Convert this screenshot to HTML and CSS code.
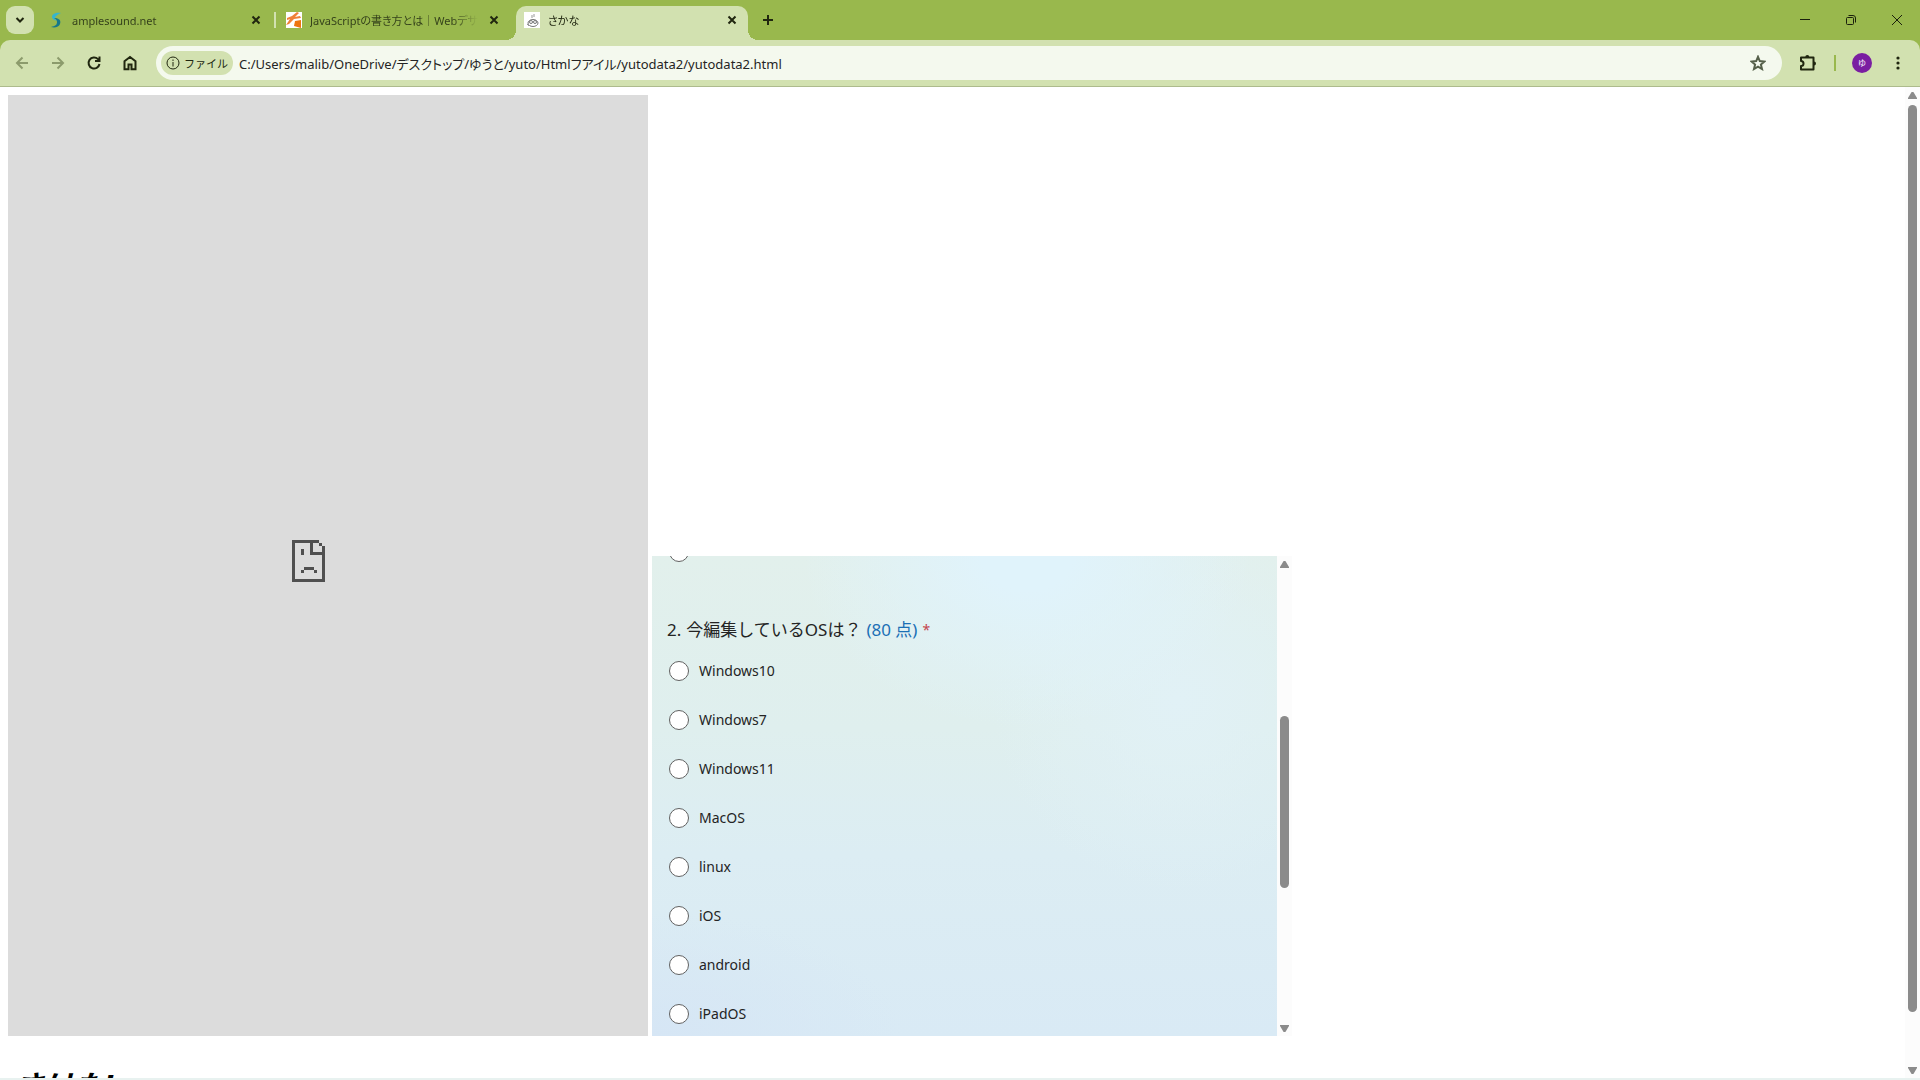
FILE: index.html
```html
<!DOCTYPE html>
<html lang="ja">
<head>
    <meta charset="UTF-8">
    <meta name="viewport" content="width=device-width, initial-scale=1.0">
    <title>さかな</title>
    <link rel="stylesheet" href="styles.css">
</head>
<body>
    <header class="browser">
        <div class="tab-bar">
            <button class="tab-search" aria-label="タブを検索">
                <svg width="10" height="6" viewBox="0 0 10 6"><path d="M1.5 1 5 4.5 8.5 1" fill="none" stroke="#20260f" stroke-width="2"/></svg>
            </button>
            <div class="tab">
                <svg class="favicon" viewBox="0 0 16 16">
                    <path d="M13 1C8 0 4 2 4 5c0 2 2 3 5 4C6 7 6 4 13 1z" fill="#35b5d0"/>
                    <path d="M8 6c4 1 5 3 4 6-1 3-5 4-9 3 4-1 6-2 6-5 0-2-1-3-3-4z" fill="#16788a"/>
                </svg>
                <span class="tab-title">amplesound.net</span>
                <button class="tab-close" aria-label="閉じる"><svg width="10" height="10" viewBox="0 0 10 10"><path d="m1.5 1.5 7 7m0-7-7 7"/></svg></button>
            </div>
            <div class="tab divided">
                <svg class="favicon" viewBox="0 0 16 16">
                    <path d="M0 0h16v16H0z" fill="#fff"/>
                    <path d="m1 6 5-2 5-4 2 1-4 4 5-1 1 2-7 1-5 5-3 1 4-6-3 1z" fill="#f08038"/>
                    <path d="m9 9 6-1v8l-7-2z" fill="#ee7410"/>
                </svg>
                <span class="tab-title">JavaScriptの書き方とは｜Webデサ</span>
                <button class="tab-close" aria-label="閉じる"><svg width="10" height="10" viewBox="0 0 10 10"><path d="m1.5 1.5 7 7m0-7-7 7"/></svg></button>
            </div>
            <div class="tab active">
                <svg class="favicon" viewBox="0 0 16 16">
                    <path d="M0 0h16v16H0z" fill="#fff"/>
                    <g fill="none" stroke="#777">
                        <ellipse cx="9" cy="11" rx="5" ry="3.5"/>
                        <circle cx="7" cy="10" r="1.5"/>
                        <circle cx="11" cy="10" r="1.5"/>
                        <path d="M8 3v3m2-4v3M3 12l2 2" stroke="#999"/>
                    </g>
                </svg>
                <span class="tab-title">さかな</span>
                <button class="tab-close" aria-label="閉じる"><svg width="10" height="10" viewBox="0 0 10 10"><path d="m1.5 1.5 7 7m0-7-7 7"/></svg></button>
            </div>
            <button class="new-tab" aria-label="新しいタブ">
                <svg width="12" height="12" viewBox="0 0 12 12"><path d="M6 1v10M1 6h10" stroke="#20260f" stroke-width="2"/></svg>
            </button>
            <div class="window-controls">
                <button aria-label="最小化"><svg width="12" height="12" viewBox="0 0 12 12"><path d="M1 5.500h10"/></svg></button>
                <button aria-label="元に戻す"><svg width="12" height="12" viewBox="0 0 12 12"><rect x="1.500" y="3.500" width="7" height="7" rx="1"/><path d="M3.500 1.500H8a2.500 2.500 0 0 1 2.500 2.500v4.500"/></svg></button>
                <button aria-label="閉じる"><svg width="12" height="12" viewBox="0 0 12 12"><path d="m1 1 10 10M11 1 1 11"/></svg></button>
            </div>
        </div>
        <div class="toolbar-wrap">
            <div class="toolbar">
                <button class="tool dim" aria-label="戻る"><svg width="16" height="16" viewBox="0 0 16 16"><path d="M14 8H3m5.500-5.500L3 8l5.500 5.500"/></svg></button>
                <button class="tool dim" aria-label="進む"><svg width="16" height="16" viewBox="0 0 16 16"><path d="M2 8h11M7.500 2.500 13 8l-5.500 5.500"/></svg></button>
                <button class="tool" aria-label="再読み込み"><svg width="16" height="16" viewBox="0 0 16 16"><path d="M13.500 9A5.500 5.500 0 1 1 12 4.100L13.500 5.500M13.500 1.500v4.500H9"/></svg></button>
                <button class="tool" aria-label="ホーム"><svg width="16" height="16" viewBox="0 0 16 16"><path d="M2.500 14.200V6.200L8 2l5.500 4.200v8h-4V9.500h-3v4.700z"/></svg></button>
                <div class="address-bar">
                    <button class="chip">
                        <svg width="14" height="14" viewBox="0 0 14 14"><circle cx="7" cy="7" r="6"/><path d="M7 6v4.500M7 3.500V5"/></svg>
                        ファイル
                    </button>
                    <input class="address" type="text" aria-label="アドレス" value="C:/Users/malib/OneDrive/デスクトップ/ゆうと/yuto/Htmlフアイル/yutodata2/yutodata2.html">
                    <button class="star" aria-label="ブックマーク"><svg width="16" height="16" viewBox="0 0 16 16"><path d="m8 1.800 1.800 4.300 4.600.4-3.500 3 1.100 4.500L8 11.600 4 14l1.100-4.500-3.500-3 4.600-.4z"/></svg></button>
                </div>
                <button class="tool" aria-label="拡張機能"><svg width="18" height="18" viewBox="0 0 18 18"><path d="M2 3.500h12.500v12H2v-3.500a2.300 2.300 0 0 0 0-5z" stroke-linejoin="round"/><path d="M6.300 3a2 2 0 0 1 4 0zM15 7.500a2 2 0 0 1 0 4z" fill="#20260f" stroke="none"/></svg></button>
                <span class="tool-divider"></span>
                <button class="tool" aria-label="プロフィール"><span class="avatar">ゆ</span></button>
                <button class="tool" aria-label="メニュー"><svg width="16" height="16" viewBox="0 0 16 16"><g fill="#20260f" stroke="none"><circle cx="8" cy="3" r="1.600"/><circle cx="8" cy="8" r="1.600"/><circle cx="8" cy="13" r="1.600"/></g></svg></button>
            </div>
        </div>
    </header>

    <div class="viewport">
        <main class="page">
            <div class="frames">
                <section class="dead-frame" aria-label="読み込めませんでした">
                    <!-- broken page icon, 11 x 14 grid -->
                    <svg width="33" height="42" viewBox="0 0 33 42" shape-rendering="crispEdges" fill="#505050">
                        <path d="M0 0h27v3H3v36h27V15H18V3h3v9h9V6h3v36H0z"/>
                        <path d="M27 3h3v3h-3zM9 9h3v6H9zM12 27h10v3H12zM9 30h3v3H9zM22 30h3v3h-3z"/>
                    </svg>
                </section>
                <section class="form-frame">
                    <form class="quiz">
                        <div class="option cut"><input type="radio" name="q1" aria-label="前の質問の選択肢"></div>
                        <fieldset>
                            <legend><span class="number">2.</span><span>今編集しているOSは？</span><span class="points">(80 点)</span><span class="required">*</span></legend>
                            <label class="option"><input type="radio" name="os">Windows10</label>
                            <label class="option"><input type="radio" name="os">Windows7</label>
                            <label class="option"><input type="radio" name="os">Windows11</label>
                            <label class="option"><input type="radio" name="os">MacOS</label>
                            <label class="option"><input type="radio" name="os">linux</label>
                            <label class="option"><input type="radio" name="os">iOS</label>
                            <label class="option"><input type="radio" name="os">android</label>
                            <label class="option"><input type="radio" name="os">iPadOS</label>
                        </fieldset>
                    </form>
                    <div class="scrollbar form-scroll">
                        <span class="arrow up"></span>
                        <span class="space-before"></span>
                        <span class="thumb"></span>
                        <span class="space-after"></span>
                        <span class="arrow down"></span>
                    </div>
                </section>
            </div>
            <h1>さけた!</h1>
        </main>
        <div class="scrollbar page-scroll">
            <span class="arrow up"></span>
            <span class="space-before"></span>
            <span class="thumb"></span>
            <span class="space-after"></span>
            <span class="arrow down"></span>
        </div>
    </div>
</body>
</html>
```
FILE: styles.css
```css
* {
    box-sizing: border-box;
}
body {
    margin: 0;
    height: 100vh;
    display: flex;
    flex-direction: column;
    overflow: hidden;
    background: white;
    border-bottom: 2px solid #e8f2f0;
    font-family: "Noto Sans", "Noto Sans CJK JP", sans-serif;
    color: #242424;
}
button {
    display: flex;
    align-items: center;
    justify-content: center;
    padding: 0;
    border: none;
    background: none;
    font-family: inherit;
    color: inherit;
}

/* tabs */
.browser {
    flex: none;
    font-feature-settings: "palt";
}
.tab-bar {
    display: flex;
    align-items: flex-start;
    gap: 6px;
    height: 40px;
    padding: 6px 0 0 6px;
    background: #99b84d;
}
.tab-search {
    width: 28px;
    height: 28px;
    border-radius: 9px;
    background: #d2e1b0;
}
.tab {
    position: relative;
    display: flex;
    align-items: center;
    gap: 8px;
    width: 232px;
    height: 34px;
    padding: 0 8px 6px;
    font-size: 11px;
    color: #35421b;
}
.tab.divided::before {
    content: "";
    position: absolute;
    left: -4px;
    top: 6px;
    width: 2px;
    height: 16px;
    background: #d2e1b0;
}
.tab.active {
    background: #d2e1b0;
    border-radius: 10px 10px 0 0;
    color: #20260f;
}
.tab.active::before,
.tab.active::after {
    content: "";
    position: absolute;
    bottom: 0;
    width: 10px;
    height: 10px;
}
.tab.active::before {
    right: 100%;
    background: radial-gradient(circle at 0 0, transparent 10px, #d2e1b0 10px);
}
.tab.active::after {
    left: 100%;
    background: radial-gradient(circle at 100% 0, transparent 10px, #d2e1b0 10px);
}
.favicon {
    flex: none;
    width: 16px;
    height: 16px;
}
.tab-title {
    flex: 1;
    overflow: hidden;
    white-space: nowrap;
    mask-image: linear-gradient(to right, black 85%, transparent);
}
.tab-close {
    width: 16px;
    height: 16px;
}
.tab-close svg {
    stroke: #20260f;
    stroke-width: 2;
}
.new-tab {
    width: 28px;
    height: 28px;
}
.window-controls {
    display: flex;
    margin-left: auto;
}
.window-controls button {
    width: 46px;
    height: 28px;
}
.window-controls svg {
    fill: none;
    stroke: #1a1f0c;
}

/* toolbar */
.toolbar-wrap {
    background: #99b84d;
}
.toolbar {
    display: flex;
    align-items: center;
    height: 47px;
    padding: 0 4px;
    background: #d2e1b0;
    border-bottom: 1px solid #adbb8d;
    border-radius: 10px 10px 0 0;
}
.tool {
    width: 36px;
    height: 34px;
}
.tool svg {
    fill: none;
    stroke: #20260f;
    stroke-width: 2;
}
.tool.dim svg {
    stroke: #8c9b6c;
}
.address-bar {
    flex: 1;
    display: flex;
    align-items: center;
    height: 34px;
    margin: 0 8px;
    padding: 0 16px 0 5px;
    border-radius: 17px;
    background: #f4f9ee;
}
.chip {
    gap: 4px;
    height: 24px;
    padding: 0 5px;
    border-radius: 12px;
    background: #d2e1b0;
    font-size: 11px;
    color: #20260f;
}
.chip svg {
    fill: none;
    stroke: #20260f;
    stroke-width: 1;
}
.address {
    flex: 1;
    min-width: 0;
    padding: 0 6px;
    border: none;
    outline: none;
    background: none;
    font-family: inherit;
    font-feature-settings: inherit;
    font-size: 13px;
    color: #242424;
}
.star svg {
    fill: none;
    stroke: #55604a;
    stroke-width: 2;
}
.tool-divider {
    width: 2px;
    height: 16px;
    margin: 0 8px;
    background: #99b84d;
}
.avatar {
    width: 20px;
    height: 20px;
    border-radius: 50%;
    background: #7a1ea1;
    color: white;
    font-size: 8px;
    line-height: 20px;
    text-align: center;
}

/* page */
.viewport {
    flex: 1;
    min-height: 0;
    display: flex;
}
.page {
    flex: 1;
    display: flex;
    flex-direction: column;
    padding: 8px 8px 0;
    overflow: hidden;
}
.frames {
    flex: 1;
    display: flex;
    align-items: flex-end;
    gap: 4px;
}
.dead-frame {
    align-self: stretch;
    display: flex;
    align-items: center;
    justify-content: center;
    width: 640px;
    padding: 0 40px 10px 0;
    background: #dcdcdc;
}
h1 {
    flex: none;
    height: 16px;
    margin: 26px 0 0 6px;
    font-size: 30px;
    font-style: italic;
    line-height: 48px;
    color: black;
}

/* form */
.form-frame {
    display: flex;
    width: 640px;
    height: 480px;
}
.quiz {
    flex: 1;
    overflow: hidden;
    padding-left: 15px;
    background:
        radial-gradient(ellipse 36% 36% at 60% 0, #e0f3fb 20%, transparent),
        radial-gradient(ellipse 30% 40% at 84% 30%, #e1f1f6, transparent),
        radial-gradient(ellipse 40% 26% at 0 100%, #d6e6f5, transparent),
        linear-gradient(#e2f0ec, #dfefee 36%, #dcedf3 62%, #d9eaf5);
}
fieldset {
    margin: 0;
    padding: 0;
    border: none;
}
legend {
    display: flex;
    gap: 5px;
    padding: 42px 0 4px;
    font-size: 17px;
    line-height: 24px;
}
.points {
    color: #1a6fb5;
}
.required {
    font-size: 14px;
    color: #c4454d;
}
.option {
    display: flex;
    align-items: center;
    gap: 10px;
    height: 49px;
    font-size: 14px;
}
.option.cut {
    margin-top: -29px;
}
.option input {
    appearance: none;
    width: 20px;
    height: 20px;
    margin: 0 0 0 2px;
    border: 1px solid #616161;
    border-radius: 50%;
    background: white;
}

/* scrollbars */
.scrollbar {
    flex: none;
    display: flex;
    flex-direction: column;
    align-items: center;
    width: 15px;
    padding: 5px 0 4px;
    background: #fcfcfc;
}
.arrow {
    width: 9px;
    height: 7px;
    background: #8b8b8b;
}
.arrow.up {
    clip-path: polygon(40% 0, 60% 0, 100% 85%, 100% 100%, 0 100%, 0 85%);
}
.arrow.down {
    clip-path: polygon(0 0, 100% 0, 100% 15%, 60% 100%, 40% 100%, 0 15%);
}
.thumb {
    width: 9px;
    border-radius: 5px;
    background: #8b8b8b;
}
.page-scroll .space-before {
    flex: 6;
}
.page-scroll .thumb {
    flex: 907;
}
.page-scroll .space-after {
    flex: 55;
}
.form-scroll .space-before {
    flex: 148;
}
.form-scroll .thumb {
    flex: 172;
}
.form-scroll .space-after {
    flex: 137;
}
```
